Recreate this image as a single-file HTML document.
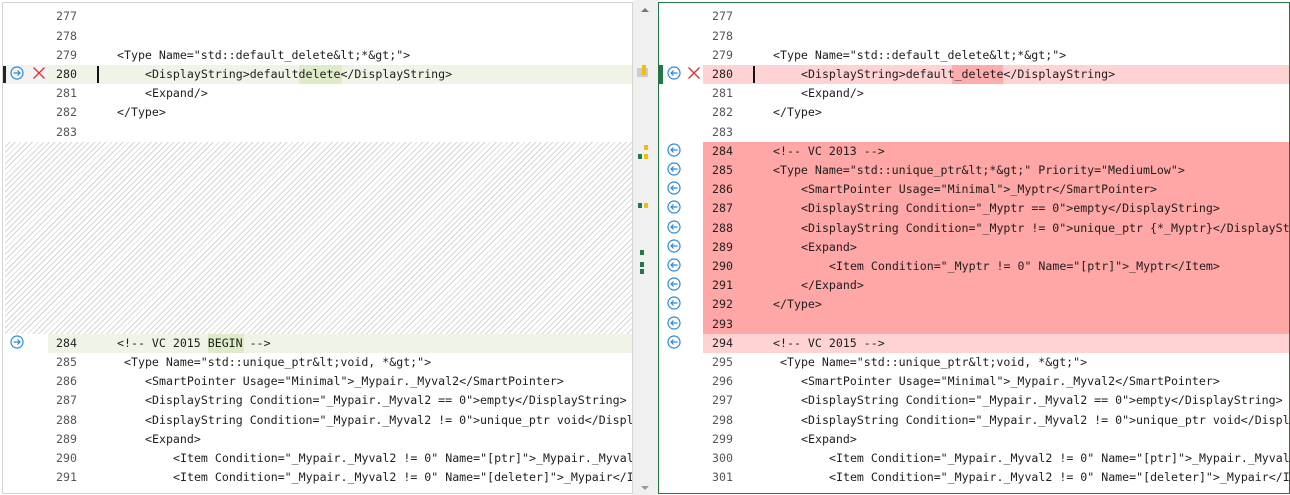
<!DOCTYPE html>
<html><head><meta charset="utf-8"><style>
*{margin:0;padding:0;box-sizing:border-box}
body{width:1290px;height:495px;background:#fff;position:relative;overflow:hidden;font-family:"DejaVu Sans Mono","Liberation Mono",monospace;font-size:11.6px;color:#1e1e1e}
.pane{position:absolute;top:0;height:495px;background:#fff;overflow:hidden}
#L{left:2px;width:631px;border:1px solid #d4d4d4;border-right:1px solid #d4d4d4;top:2px;height:492px}
#R{left:658px;width:632px;border:1px solid #217346;top:2px;height:492px}
#G{position:absolute;left:633px;top:0;width:25px;height:495px;background:#f0f0f0}
.ln{position:absolute;height:19.2px;line-height:19.2px;white-space:pre;left:0;right:0}
.n{position:absolute;width:30px;text-align:right;color:#555}
.c{position:absolute}
.hatch{position:absolute;left:2px;right:0;background:repeating-linear-gradient(135deg,#fff 0,#fff 3px,#d6d6d6 3px,#d6d6d6 4px)}
.ic{position:absolute;width:14px;height:14px}
</style></head><body>
<div id="L" class="pane">
<div class="ln" style="top:4.4px"><span class="n" style="left:44px">277</span></div>
<div class="ln" style="top:23.6px"><span class="n" style="left:44px">278</span></div>
<div class="ln" style="top:42.8px"><span class="n" style="left:44px">279</span><span class="c" style="left:114px">&lt;Type Name="std::default_delete&amp;lt;*&amp;gt;"&gt;</span></div>
<div class="ln" style="top:62px;background:linear-gradient(90deg,#f3f3f3 0,#f3f3f3 45px,#eff4e6 45px)"><span style="position:absolute;left:0;top:1px;width:3px;height:17px;background:#222"></span><span style="position:absolute;left:94px;top:1px;width:2px;height:17px;background:#111"></span><span style="position:absolute;left:296px;top:0;width:43px;height:19px;background:#dfeac8"></span><span class="n" style="left:44px;color:#222">280</span><span class="c" style="left:142px">&lt;DisplayString&gt;defaultdelete&lt;/DisplayString&gt;</span></div>
<div class="ln" style="top:81.2px"><span class="n" style="left:44px">281</span><span class="c" style="left:142px">&lt;Expand/&gt;</span></div>
<div class="ln" style="top:100.4px"><span class="n" style="left:44px">282</span><span class="c" style="left:114px">&lt;/Type&gt;</span></div>
<div class="ln" style="top:119.6px"><span class="n" style="left:44px">283</span></div>
<div class="hatch" style="top:138.8px;height:192px"></div>
<div class="ln" style="top:330.8px;background:linear-gradient(90deg,#fff 0,#fff 45px,#eff4e6 45px)"><span style="position:absolute;left:205px;top:0;width:36px;height:19px;background:#dfeac8"></span><span class="n" style="left:44px;color:#222">284</span><span class="c" style="left:114px">&lt;!-- VC 2015 BEGIN --&gt;</span></div>
<div class="ln" style="top:350px"><span class="n" style="left:44px">285</span><span class="c" style="left:121px">&lt;Type Name="std::unique_ptr&amp;lt;void, *&amp;gt;"&gt;</span></div>
<div class="ln" style="top:369.2px"><span class="n" style="left:44px">286</span><span class="c" style="left:142px">&lt;SmartPointer Usage="Minimal"&gt;_Mypair._Myval2&lt;/SmartPointer&gt;</span></div>
<div class="ln" style="top:388.4px"><span class="n" style="left:44px">287</span><span class="c" style="left:142px">&lt;DisplayString Condition="_Mypair._Myval2 == 0"&gt;empty&lt;/DisplayString&gt;</span></div>
<div class="ln" style="top:407.6px"><span class="n" style="left:44px">288</span><span class="c" style="left:142px">&lt;DisplayString Condition="_Mypair._Myval2 != 0"&gt;unique_ptr void&lt;/DisplayString&gt;</span></div>
<div class="ln" style="top:426.8px"><span class="n" style="left:44px">289</span><span class="c" style="left:142px">&lt;Expand&gt;</span></div>
<div class="ln" style="top:446px"><span class="n" style="left:44px">290</span><span class="c" style="left:170px">&lt;Item Condition="_Mypair._Myval2 != 0" Name="[ptr]"&gt;_Mypair._Myval2&lt;/Item&gt;</span></div>
<div class="ln" style="top:465.2px"><span class="n" style="left:44px">291</span><span class="c" style="left:170px">&lt;Item Condition="_Mypair._Myval2 != 0" Name="[deleter]"&gt;_Mypair&lt;/Item&gt;</span></div>
<svg class="ic" style="left:7px;top:63px" viewBox="0 0 14 14"><circle cx="7" cy="7" r="6" fill="none" stroke="#2a8ad4" stroke-width="1.2"/><path d="M3.5 7H10M7.5 4.5L10 7L7.5 9.5" fill="none" stroke="#2a8ad4" stroke-width="1.2"/></svg>
<svg class="ic" style="left:29px;top:63px" viewBox="0 0 14 14"><path d="M1.5 1.5L12.5 12.5M12.5 1.5L1.5 12.5" stroke="#e03030" stroke-width="1.3"/></svg>
<svg class="ic" style="left:7px;top:332px" viewBox="0 0 14 14"><circle cx="7" cy="7" r="6" fill="none" stroke="#2a8ad4" stroke-width="1.2"/><path d="M3.5 7H10M7.5 4.5L10 7L7.5 9.5" fill="none" stroke="#2a8ad4" stroke-width="1.2"/></svg>
</div>
<div id="G">
<div style="position:absolute;left:8px;top:8px;border:4px solid transparent;border-bottom:4px solid #777;border-top:0"></div>
<div style="position:absolute;left:8px;top:486px;border:4px solid transparent;border-top:4px solid #999;border-bottom:0"></div>
<div style="position:absolute;left:4px;top:68px;width:11px;height:9px;background:#ccc"></div>
<div style="position:absolute;left:9px;top:65px;width:4px;height:10px;background:#f0c000"></div>
<div style="position:absolute;left:11px;top:145px;width:4px;height:5px;background:#f0c000"></div>
<div style="position:absolute;left:5px;top:154px;width:4px;height:5px;background:#1e7a46"></div>
<div style="position:absolute;left:11px;top:154px;width:4px;height:5px;background:#f0c000"></div>
<div style="position:absolute;left:5px;top:203px;width:4px;height:5px;background:#1e7a46"></div>
<div style="position:absolute;left:11px;top:203px;width:4px;height:5px;background:#f0c000"></div>
<div style="position:absolute;left:7px;top:250px;width:4px;height:5px;background:#1e7a46"></div>
<div style="position:absolute;left:7px;top:262px;width:4px;height:5px;background:#1e7a46"></div>
<div style="position:absolute;left:7px;top:269px;width:4px;height:5px;background:#1e7a46"></div>
</div>
<div id="R" class="pane">
<div class="ln" style="top:4.4px"><span class="n" style="left:44px">277</span></div>
<div class="ln" style="top:23.6px"><span class="n" style="left:44px">278</span></div>
<div class="ln" style="top:42.8px"><span class="n" style="left:44px">279</span><span class="c" style="left:114px">&lt;Type Name="std::default_delete&amp;lt;*&amp;gt;"&gt;</span></div>
<div class="ln" style="top:62px;background:linear-gradient(90deg,#fff 0,#fff 44px,#ffd3d3 44px)"><span style="position:absolute;left:0;top:0;width:4px;height:19px;background:#1e7a46"></span><span style="position:absolute;left:94px;top:1px;width:2px;height:17px;background:#111"></span><span style="position:absolute;left:293px;top:0;width:51px;height:19px;background:#ffacac"></span><span class="n" style="left:44px;color:#222">280</span><span class="c" style="left:142px">&lt;DisplayString&gt;default_delete&lt;/DisplayString&gt;</span></div>
<div class="ln" style="top:81.2px"><span class="n" style="left:44px">281</span><span class="c" style="left:142px">&lt;Expand/&gt;</span></div>
<div class="ln" style="top:100.4px"><span class="n" style="left:44px">282</span><span class="c" style="left:114px">&lt;/Type&gt;</span></div>
<div class="ln" style="top:119.6px"><span class="n" style="left:44px">283</span></div>
<div style="position:absolute;left:44px;right:0;top:138.8px;height:192px;background:#ffa6a6"></div>
<div class="ln" style="top:138.8px"><span class="n" style="left:44px;color:#222">284</span><span class="c" style="left:114px">&lt;!-- VC 2013 --&gt;</span></div>
<div class="ln" style="top:158px"><span class="n" style="left:44px;color:#222">285</span><span class="c" style="left:114px">&lt;Type Name="std::unique_ptr&amp;lt;*&amp;gt;" Priority="MediumLow"&gt;</span></div>
<div class="ln" style="top:177.2px"><span class="n" style="left:44px;color:#222">286</span><span class="c" style="left:142px">&lt;SmartPointer Usage="Minimal"&gt;_Myptr&lt;/SmartPointer&gt;</span></div>
<div class="ln" style="top:196.4px"><span class="n" style="left:44px;color:#222">287</span><span class="c" style="left:142px">&lt;DisplayString Condition="_Myptr == 0"&gt;empty&lt;/DisplayString&gt;</span></div>
<div class="ln" style="top:215.6px"><span class="n" style="left:44px;color:#222">288</span><span class="c" style="left:142px">&lt;DisplayString Condition="_Myptr != 0"&gt;unique_ptr {*_Myptr}&lt;/DisplayString&gt;</span></div>
<div class="ln" style="top:234.8px"><span class="n" style="left:44px;color:#222">289</span><span class="c" style="left:142px">&lt;Expand&gt;</span></div>
<div class="ln" style="top:254px"><span class="n" style="left:44px;color:#222">290</span><span class="c" style="left:170px">&lt;Item Condition="_Myptr != 0" Name="[ptr]"&gt;_Myptr&lt;/Item&gt;</span></div>
<div class="ln" style="top:273.2px"><span class="n" style="left:44px;color:#222">291</span><span class="c" style="left:142px">&lt;/Expand&gt;</span></div>
<div class="ln" style="top:292.4px"><span class="n" style="left:44px;color:#222">292</span><span class="c" style="left:114px">&lt;/Type&gt;</span></div>
<div class="ln" style="top:311.6px"><span class="n" style="left:44px;color:#222">293</span></div>
<div class="ln" style="top:330.8px;background:linear-gradient(90deg,#fff 0,#fff 44px,#ffd3d3 44px)"><span class="n" style="left:44px;color:#222">294</span><span class="c" style="left:114px">&lt;!-- VC 2015 --&gt;</span></div>
<div class="ln" style="top:350px"><span class="n" style="left:44px">295</span><span class="c" style="left:121px">&lt;Type Name="std::unique_ptr&amp;lt;void, *&amp;gt;"&gt;</span></div>
<div class="ln" style="top:369.2px"><span class="n" style="left:44px">296</span><span class="c" style="left:142px">&lt;SmartPointer Usage="Minimal"&gt;_Mypair._Myval2&lt;/SmartPointer&gt;</span></div>
<div class="ln" style="top:388.4px"><span class="n" style="left:44px">297</span><span class="c" style="left:142px">&lt;DisplayString Condition="_Mypair._Myval2 == 0"&gt;empty&lt;/DisplayString&gt;</span></div>
<div class="ln" style="top:407.6px"><span class="n" style="left:44px">298</span><span class="c" style="left:142px">&lt;DisplayString Condition="_Mypair._Myval2 != 0"&gt;unique_ptr void&lt;/DisplayString&gt;</span></div>
<div class="ln" style="top:426.8px"><span class="n" style="left:44px">299</span><span class="c" style="left:142px">&lt;Expand&gt;</span></div>
<div class="ln" style="top:446px"><span class="n" style="left:44px">300</span><span class="c" style="left:170px">&lt;Item Condition="_Mypair._Myval2 != 0" Name="[ptr]"&gt;_Mypair._Myval2&lt;/Item&gt;</span></div>
<div class="ln" style="top:465.2px"><span class="n" style="left:44px">301</span><span class="c" style="left:170px">&lt;Item Condition="_Mypair._Myval2 != 0" Name="[deleter]"&gt;_Mypair&lt;/Item&gt;</span></div>
<svg class="ic" style="left:28px;top:63px" viewBox="0 0 14 14"><path d="M1.5 1.5L12.5 12.5M12.5 1.5L1.5 12.5" stroke="#e03030" stroke-width="1.3"/></svg>
<svg width="16" height="360" style="position:absolute;left:8px;top:0">
<defs><g id="a"><circle cx="7" cy="7" r="6" fill="none" stroke="#2a8ad4" stroke-width="1.2"/><path d="M10.5 7H4M6.5 4.5L4 7L6.5 9.5" fill="none" stroke="#2a8ad4" stroke-width="1.2"/></g></defs>
<use href="#a" y="63"/><use href="#a" y="140"/><use href="#a" y="159"/><use href="#a" y="178"/><use href="#a" y="197"/><use href="#a" y="217"/><use href="#a" y="236"/><use href="#a" y="255"/><use href="#a" y="274"/><use href="#a" y="293"/><use href="#a" y="313"/><use href="#a" y="332"/>
</svg>
</div>
</body></html>
